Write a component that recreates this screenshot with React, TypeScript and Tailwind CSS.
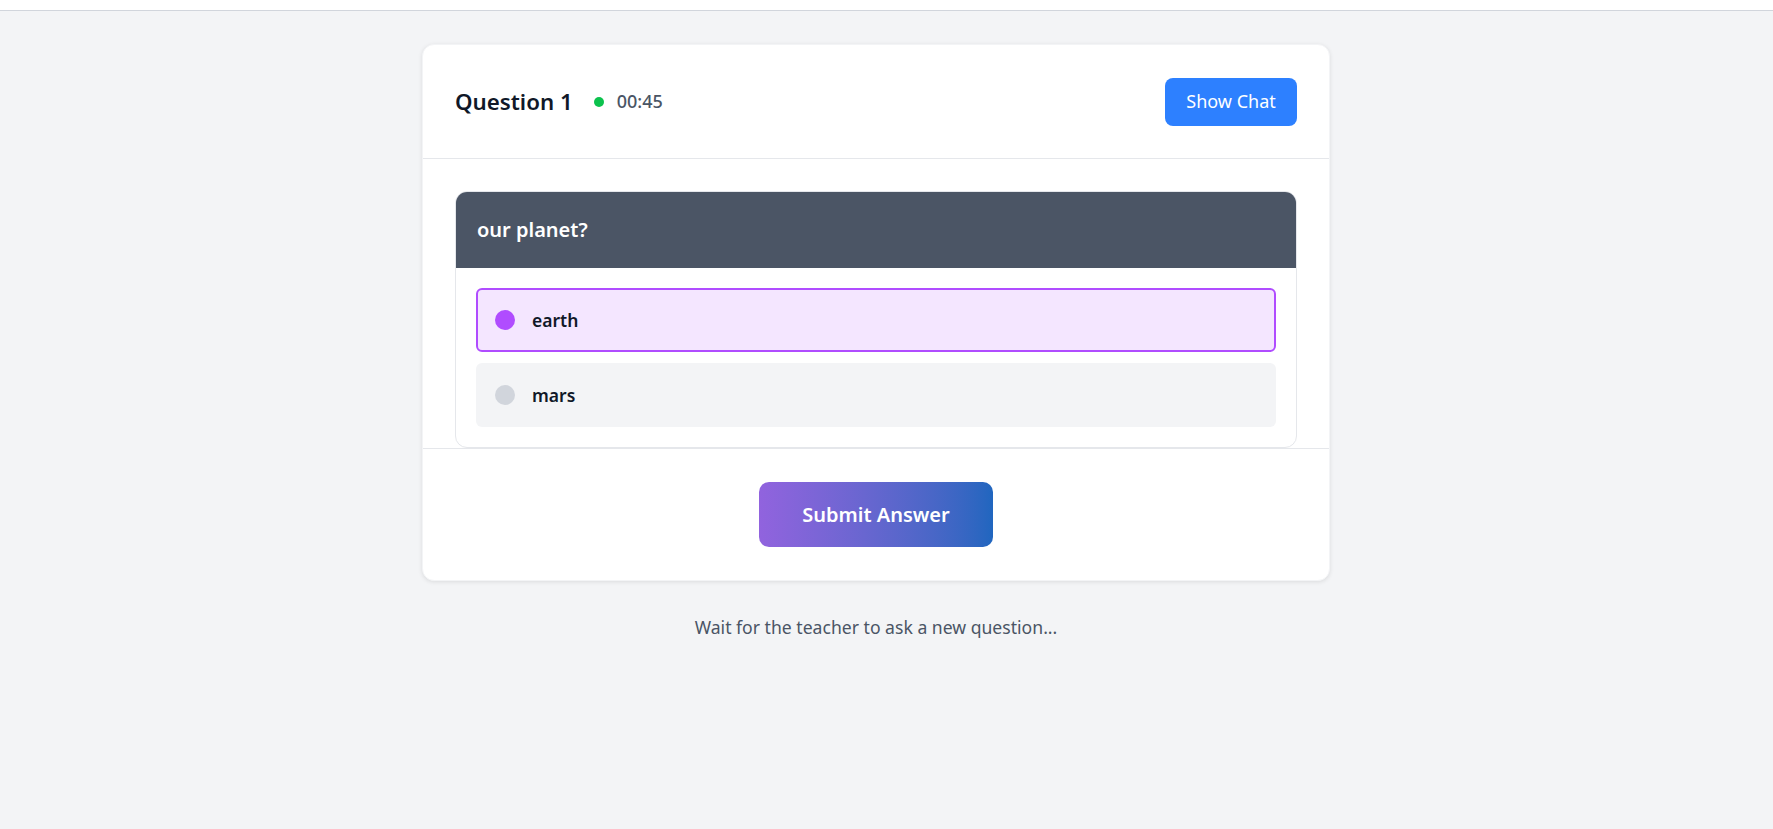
import { useState } from "react"

const options = ["earth", "mars"]

function Option({ label, selected, onClick }: { label: string; selected: boolean; onClick: () => void }) {
  return (
    <button
      onClick={onClick}
      className={
        selected
          ? "flex h-16 w-full items-center gap-[17px] rounded-md border-2 border-[#b04cff] bg-[#f4e6ff] px-[17px] text-left"
          : "flex h-16 w-full items-center gap-[17px] rounded-md border-2 border-transparent bg-gray-100 px-[17px] text-left"
      }
    >
      <span className={selected ? "h-5 w-5 rounded-full bg-[#b04cff]" : "h-5 w-5 rounded-full bg-gray-300"} />
      <span className="text-[17.5px] font-semibold text-gray-900">{label}</span>
    </button>
  )
}

export default function App() {
  const [selected, setSelected] = useState("earth")

  return (
    <div className="min-h-screen bg-gray-100 font-['Noto_Sans',sans-serif]">
      <div className="h-[11px] border-b border-gray-300 bg-white" />
      <main className="flex flex-col items-center pr-[21px] pt-[33px]">
        <div className="w-[908px] overflow-hidden rounded-xl border border-gray-100 bg-white shadow-[0_1px_4px_rgba(0,0,0,0.1)]">
          <div className="flex h-[114px] items-center justify-between border-b border-gray-200 px-[32px]">
            <div className="flex items-center">
              <h2 className="text-[22.3px] font-semibold text-gray-900">Question 1</h2>
              <span className="ml-[21px] h-[10px] w-[10px] rounded-full bg-[#0cc24d]" />
              <span className="ml-[13px] text-[18px] font-medium text-gray-600">00:45</span>
            </div>
            <button className="h-12 w-[132px] rounded-lg bg-[#2d80ff] text-[18px] text-white">Show Chat</button>
          </div>

          <div className="px-[32px] pt-[32px]">
            <div className="overflow-hidden rounded-xl border border-gray-200">
              <div className="flex h-[76px] items-center bg-[#4b5565] px-[21px]">
                <p className="text-[20px] font-semibold text-white">our planet?</p>
              </div>
              <div className="flex flex-col gap-[11px] p-5">
                {options.map(o => (
                  <Option key={o} label={o} selected={selected === o} onClick={() => setSelected(o)} />
                ))}
              </div>
            </div>
          </div>

          <div className="flex justify-center border-t border-gray-200 py-[33px]">
            <button className="h-[65px] w-[234px] rounded-[10px] bg-gradient-to-r from-[#9163de] to-[#2066bf] text-[20px] font-semibold text-white">
              Submit Answer
            </button>
          </div>
        </div>

        <p className="mt-[33px] text-[17.6px] text-gray-600">Wait for the teacher to ask a new question...</p>
      </main>
    </div>
  )
}
